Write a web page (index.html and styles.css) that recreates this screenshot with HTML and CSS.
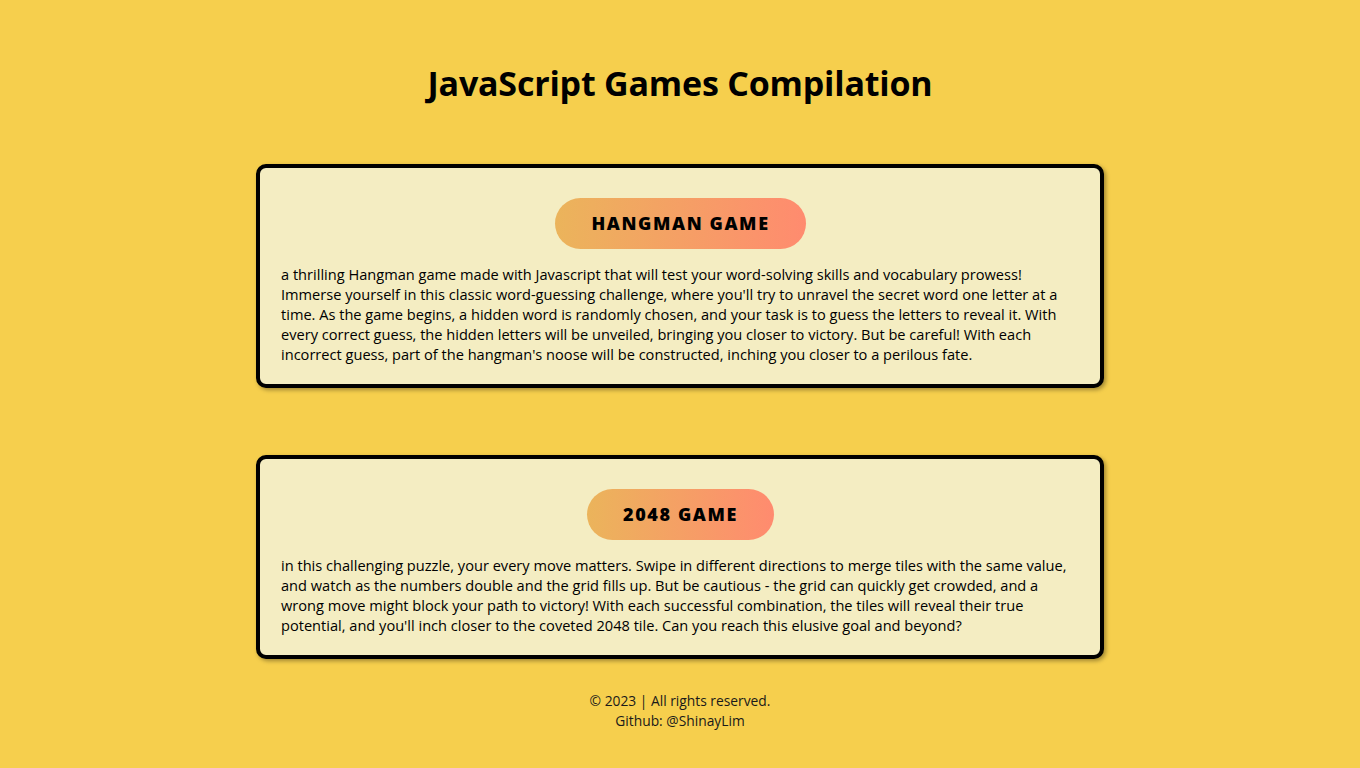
FILE: index.html
```html
<!DOCTYPE html>
<html lang="en">
<head>
<meta charset="utf-8">
<title>JavaScript Games Compilation</title>
<link rel="stylesheet" href="styles.css">
</head>
<body>
  <main class="page">
    <h1 class="title">JavaScript Games Compilation</h1>
    <section class="card">
      <a class="game-btn">HANGMAN GAME</a>
      <p class="desc">a thrilling Hangman game made with Javascript that will test your word-solving skills and vocabulary prowess! Immerse yourself in this classic word-guessing challenge, where you'll try to unravel the secret word one letter at a time. As the game begins, a hidden word is randomly chosen, and your task is to guess the letters to reveal it. With every correct guess, the hidden letters will be unveiled, bringing you closer to victory. But be careful! With each incorrect guess, part of the hangman's noose will be constructed, inching you closer to a perilous fate.</p>
    </section>
    <section class="card">
      <a class="game-btn">2048 GAME</a>
      <p class="desc">in this challenging puzzle, your every move matters. Swipe in different directions to merge tiles with the same value, and watch as the numbers double and the grid fills up. But be cautious - the grid can quickly get crowded, and a wrong move might block your path to victory! With each successful combination, the tiles will reveal their true potential, and you'll inch closer to the coveted 2048 tile. Can you reach this elusive goal and beyond?</p>
    </section>
    <footer class="footer">
      <p>© 2023 | All rights reserved.</p>
      <p>Github: @ShinayLim</p>
    </footer>
  </main>
</body>
</html>
```

FILE: styles.css
```css
* { box-sizing: border-box; }
html, body { margin: 0; padding: 0; }
body {
  background: #f6cf4d;
  font-family: "Open Sans", "Noto Sans", sans-serif;
  color: #000;
}
.page {
  display: flex;
  flex-direction: column;
  align-items: center;
  padding-top: 58px;
}
.title {
  margin: 0;
  font-size: 34px;
  line-height: 51px;
  font-weight: 700;
  letter-spacing: -0.2px;
}
.card {
  width: 848px;
  margin-top: 55px;
  background: #f4edc2;
  border: 4px solid #000;
  border-radius: 10px;
  box-shadow: 2px 2px 4px rgba(0,0,0,0.35);
  padding: 30px 20px 20px 21px;
  display: flex;
  flex-direction: column;
  align-items: center;
}
.card + .card { margin-top: 67px; }
.game-btn {
  display: inline-block;
  padding: 15px 36px;
  border-radius: 26px;
  background: linear-gradient(to right, #ebb45b, #ff8b6f);
  font-size: 18px;
  line-height: 21px;
  font-weight: 800;
  letter-spacing: 1.6px;
  color: #000;
}
.desc {
  margin: 15px 0 0;
  align-self: stretch;
  font-size: 14.6px;
  line-height: 20px;
  font-weight: 500;
}
.footer {
  margin-top: 32px;
  text-align: center;
  font-size: 13.8px;
  line-height: 20px;
  color: #1a1a1a;
}
.footer p { margin: 0; }
```
